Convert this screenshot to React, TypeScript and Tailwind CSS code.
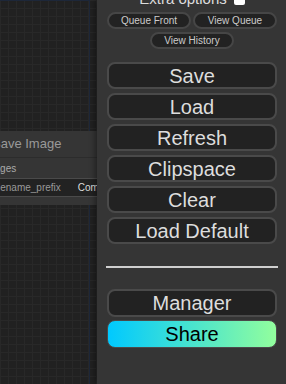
import React from "react";

const font = { fontFamily: '"Liberation Sans", Arial, sans-serif' };

const bigButtons = ["Save", "Load", "Refresh", "Clipspace", "Clear", "Load Default"];

function SmallButton({ label, w = "w-[84px]" }: { label: string; w?: string }) {
  return (
    <button className={`${w} h-[17px] rounded-full border-2 border-[#464646] bg-[#222] text-[#ccc] text-[10px] leading-none flex items-center justify-center`}>
      {label}
    </button>
  );
}

function BigButton({ label }: { label: string }) {
  return (
    <button className="w-full h-[27px] rounded-[8px] border-2 border-[#4a4a4a] bg-[#222] text-[#ddd] text-[20px] leading-none flex items-center justify-center">
      {label}
    </button>
  );
}

export default function App() {
  return (
    <div className="w-[286px] h-[384px] flex overflow-hidden bg-[#212121]" style={font}>
      {/* canvas */}
      <div className="relative w-[97px] shrink-0 h-full overflow-hidden bg-[#212121] bg-[linear-gradient(#282828_1px,transparent_1px),linear-gradient(90deg,#282828_1px,transparent_1px)] bg-[size:8px_8px]">
        <div className="absolute left-0 top-0 w-[90px] h-[1px] bg-[#1d2739]" />
        <div className="absolute left-[89px] top-0 w-[1px] h-full bg-[#1d2739]" />

        {/* node */}
        <div className="absolute left-[-40px] top-[131px] w-[170px] bg-[#353535]">
          <div className="h-[27px] flex items-center pl-[32px] text-[#999] text-[13px] border-b border-[#2c2c2c]">
            Save Image
          </div>
          <div className="h-[20px] flex items-center pl-[24px] text-[#aaa] text-[10px]">
            images
          </div>
          <div className="h-[19px] ml-[15px] flex items-center bg-[#222] border-y border-[#4a4a4a] text-[10px]">
            <span className="pl-[18px] text-[#999]">filename_prefix</span>
            <span className="ml-[17px] text-[#ddd]">ComfyUI</span>
          </div>
          <div className="h-[8px]" />
        </div>
      </div>

      {/* menu */}
      <div className="flex-1 h-full bg-[#353535] px-[10px] flex flex-col shadow-[-2px_0_6px_rgba(0,0,0,0.4)] z-10">
        <div className="-mt-[10px] h-[17px] flex items-center justify-center text-[15px] text-[#ddd] leading-[17px]">
          <span>Extra options</span>
          <span className="ml-[7px] w-[11px] h-[12px] bg-white rounded-[2px]" />
        </div>

        <div className="mt-[5px] flex justify-center gap-[2px]">
          <SmallButton label="Queue Front" />
          <SmallButton label="View Queue" />
        </div>
        <div className="mt-[3px] flex justify-center">
          <SmallButton label="View History" />
        </div>

        <div className="mt-[13px] flex flex-col gap-[4px]">
          {bigButtons.map((b) => (
            <BigButton key={b} label={b} />
          ))}
        </div>

        <div className="mt-[22px] -mx-[1px] h-[2px] bg-[#cfcfcf]" />

        <div className="mt-[21px] flex flex-col gap-[3px]">
          <button className="w-full h-[28px] rounded-[8px] border-2 border-[#4a4a4a] bg-[#222] text-[#ddd] text-[20px] leading-none flex items-center justify-center">
            Manager
          </button>
          <button className="w-full h-[28px] rounded-[8px] border border-[#4a4a4a] bg-[linear-gradient(90deg,#00C9FF_0%,#92FE9D_100%)] text-black text-[20px] leading-none flex items-center justify-center">
            Share
          </button>
        </div>
      </div>
    </div>
  );
}
